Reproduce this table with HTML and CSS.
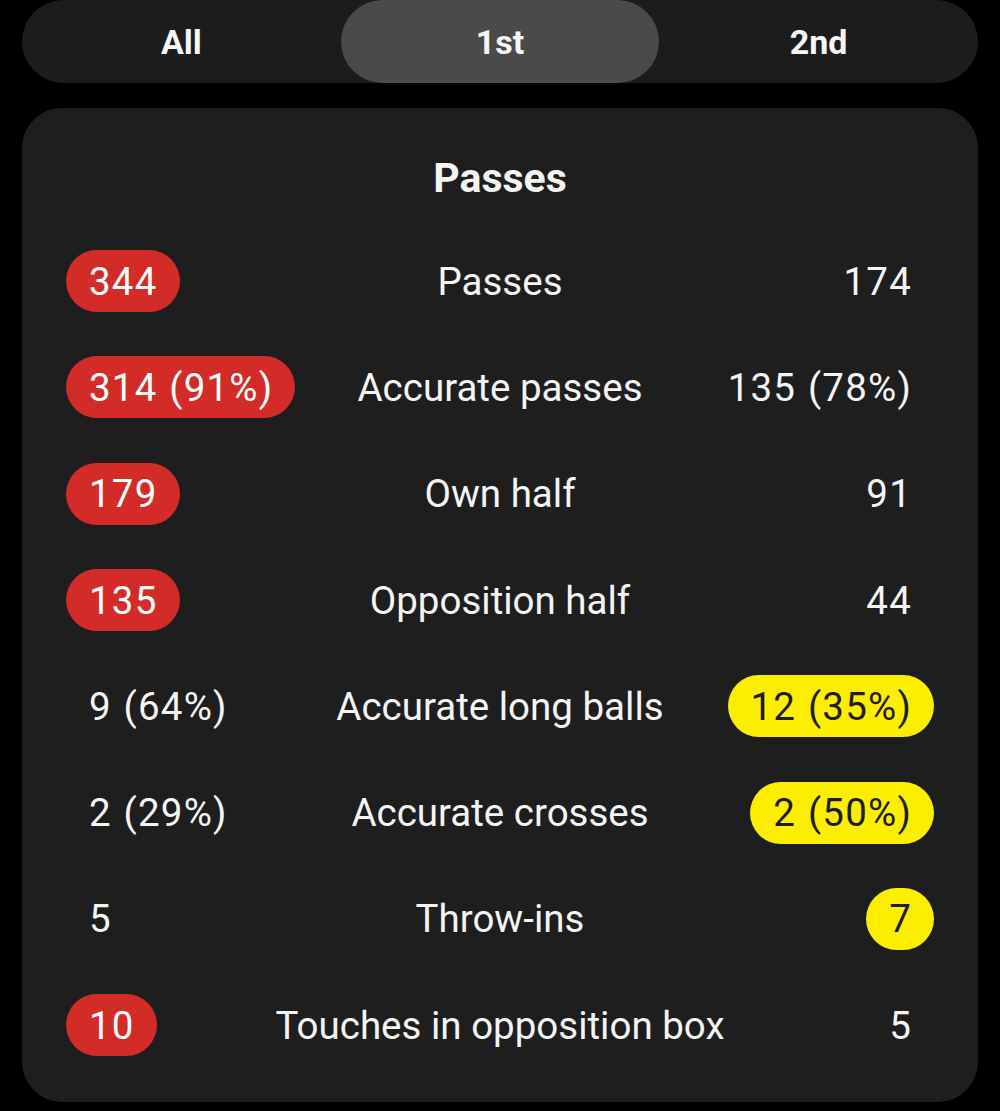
FILE: index.html
```html
<!DOCTYPE html>
<html>
<head>
<meta charset="utf-8">
<link rel="stylesheet" href="styles.css">
</head>
<body>
<div class="page">
  <div class="tabs">
    <div class="tab">All</div>
    <div class="tab active">1st</div>
    <div class="tab">2nd</div>
  </div>
  <div class="card">
    <div class="title">Passes</div>
    <div class="rows">
      <div class="row"><div class="l"><span class="v red">344</span></div><div class="lbl">Passes</div><div class="r"><span class="v">174</span></div></div>
      <div class="row"><div class="l"><span class="v red">314 (91%)</span></div><div class="lbl">Accurate passes</div><div class="r"><span class="v">135 (78%)</span></div></div>
      <div class="row"><div class="l"><span class="v red">179</span></div><div class="lbl">Own half</div><div class="r"><span class="v">91</span></div></div>
      <div class="row"><div class="l"><span class="v red">135</span></div><div class="lbl">Opposition half</div><div class="r"><span class="v">44</span></div></div>
      <div class="row"><div class="l"><span class="v">9 (64%)</span></div><div class="lbl">Accurate long balls</div><div class="r"><span class="v yellow">12 (35%)</span></div></div>
      <div class="row"><div class="l"><span class="v">2 (29%)</span></div><div class="lbl">Accurate crosses</div><div class="r"><span class="v yellow">2 (50%)</span></div></div>
      <div class="row"><div class="l"><span class="v">5</span></div><div class="lbl">Throw-ins</div><div class="r"><span class="v yellow">7</span></div></div>
      <div class="row"><div class="l"><span class="v red">10</span></div><div class="lbl">Touches in opposition box</div><div class="r"><span class="v">5</span></div></div>
    </div>
  </div>
</div>
</body>
</html>
```
FILE: styles.css
```css
* { box-sizing: border-box; }
html, body { margin: 0; padding: 0; background: #000; }
body { font-family: Roboto, "Noto Sans", sans-serif; color: #f4f4f4; width: 1000px; height: 1111px; overflow: hidden; }
.page { padding: 0 22px; }
.tabs {
  display: grid;
  grid-template-columns: 1fr 1fr 1fr;
  height: 83px;
  background: #1c1c1c;
  border-radius: 42px;
}
.tab {
  display: flex;
  align-items: center;
  justify-content: center;
  font-weight: 700;
  font-size: 34px;
  color: #f6f6f6;
  border-radius: 42px;
}
.tab.active { background: #4a4a4a; }
.card {
  margin-top: 25px;
  background: #1e1e1e;
  border-radius: 40px;
  padding: 40px 44px 24px;
  height: 994px;
}
.title {
  height: 60px;
  line-height: 60px;
  text-align: center;
  font-weight: 700;
  font-size: 41px;
}
.rows { margin-top: 20px; }
.row {
  display: grid;
  grid-template-columns: 1fr auto 1fr;
  align-items: center;
  height: 106.3px;
  font-size: 38.5px;
}
.lbl { text-align: center; padding: 0 20px; white-space: nowrap; }
.l { display: flex; justify-content: flex-start; }
.r { display: flex; justify-content: flex-end; }
.v {
  display: inline-flex;
  align-items: center;
  justify-content: center;
  height: 62px;
  min-width: 67px;
  padding: 0 22px 0 23px;
  border-radius: 31px;
  white-space: nowrap;
  letter-spacing: 1.2px;
  word-spacing: 1px;
}
.v.red { background: #d22b28; color: #fff; }
.v.yellow { background: #fdee00; color: #1e1e1e; }
```
